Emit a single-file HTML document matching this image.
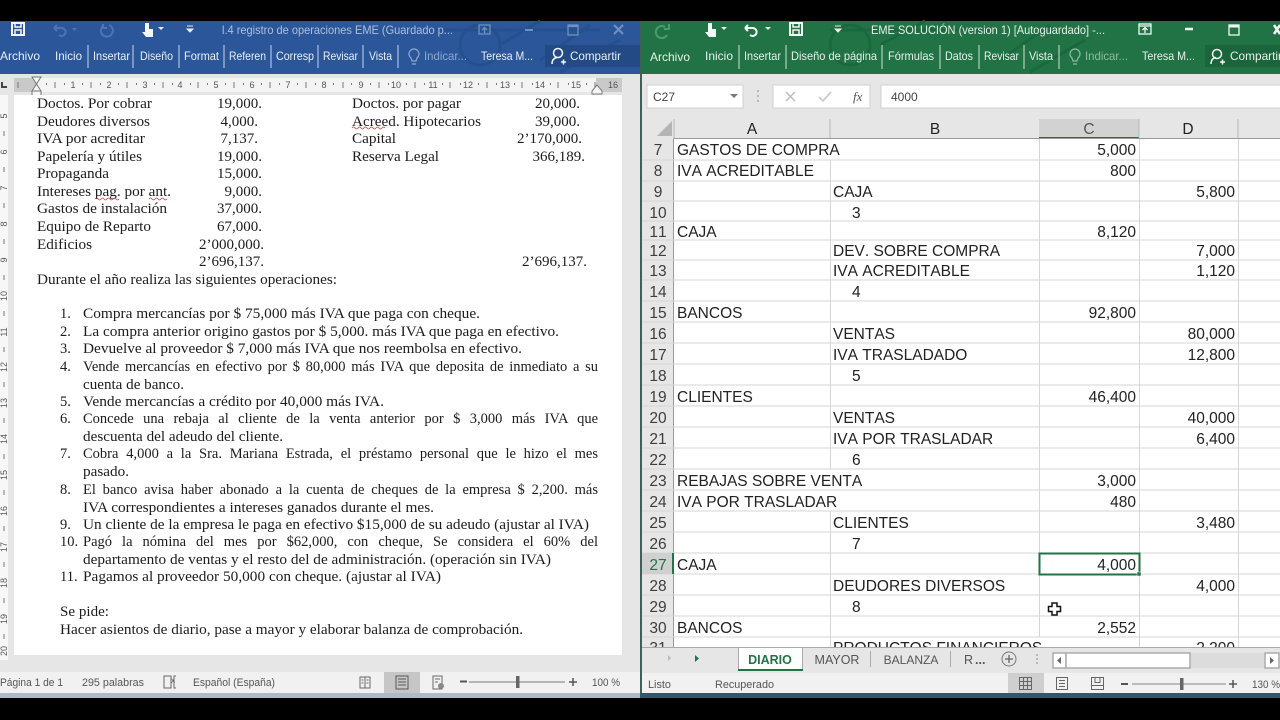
<!DOCTYPE html>
<html lang="es"><head><meta charset="utf-8"><title>Word y Excel</title>
<style>
html,body{margin:0;padding:0;background:#000;width:1280px;height:720px;overflow:hidden}
svg{position:absolute;left:0;top:0}
.u{font-family:"Liberation Sans",sans-serif}
.w{font-family:"Liberation Serif",serif;font-size:14.5px;fill:#1c1c1c}
.w .r{font-size:15px}
.x{font-family:"Liberation Sans",sans-serif;font-size:15.5px;fill:#222;font-kerning:none}
.r{text-anchor:end}
.c{text-anchor:middle}
.h{fill:#3d3d3d;text-anchor:middle}
.t{font-family:"Liberation Sans",sans-serif;font-size:12px;fill:#e8eef6}
.tg{font-family:"Liberation Sans",sans-serif;font-size:12px;fill:#e6f1ea}
.s{font-family:"Liberation Sans",sans-serif;font-size:11px;fill:#555}
.rl{font-family:"Liberation Sans",sans-serif;font-size:9px;fill:#555;text-anchor:middle}
.j{position:absolute;left:83px;width:515px;font:14.5px/18px "Liberation Serif",serif;color:#1c1c1c;text-align:justify;text-align-last:justify;white-space:nowrap}
.soft{position:absolute;left:0;top:0;width:1280px;height:720px;filter:blur(.3px)}
</style></head><body>
<div class="soft">
<svg width="1280" height="720" viewBox="0 0 1280 720">
<rect width="1280" height="720" fill="#000"/>

<!-- WORD window -->
<rect x="0" y="21" width="640" height="53" fill="#2b579a"/>
<g fill="none" stroke="#24508f" stroke-width="3">
<circle cx="480" cy="45" r="20"/><path d="M440 30H600M500 45L540 21M540 60L590 25M560 72L620 40"/>
</g>
<rect x="0" y="74" width="640" height="598" fill="#e6e6e6"/>
<rect x="14" y="78" width="608" height="14" fill="#f4f4f4"/>
<rect x="14" y="78" width="22" height="14" fill="#c9c9c9"/>
<rect x="596" y="78" width="26" height="14" fill="#c9c9c9"/>
<path d="M2 82v5h5" stroke="#444" stroke-width="2" fill="none"/>
<g>
<text class="rl" x="73" y="88">1</text><text class="rl" x="109" y="88">2</text><text class="rl" x="145" y="88">3</text><text class="rl" x="180" y="88">4</text><text class="rl" x="216" y="88">5</text><text class="rl" x="252" y="88">6</text><text class="rl" x="288" y="88">7</text><text class="rl" x="324" y="88">8</text><text class="rl" x="361" y="88">9</text><text class="rl" x="396" y="88">10</text><text class="rl" x="433" y="88">11</text><text class="rl" x="468" y="88">12</text><text class="rl" x="505" y="88">13</text><text class="rl" x="540" y="88">14</text><text class="rl" x="576" y="88">15</text><text class="rl" x="613" y="88">16</text>
</g>
<path d="M18 82v6M55 82v6M91 82v6M127 82v6M163 82v6M198 82v6M234 82v6M270 82v6M306 82v6M343 82v6M379 82v6M415 82v6M450 82v6M487 82v6M522 82v6M558 82v6M595 82v6" stroke="#777" stroke-width="1"/>
<path d="M46 84h1M64 84h1M82 84h1M100 84h1M118 84h1M136 84h1M154 84h1M172 84h1M190 84h1M207 84h1M225 84h1M243 84h1M261 84h1M279 84h1M297 84h1M315 84h1M333 84h1M351 84h1M370 84h1M388 84h1M406 84h1M424 84h1M442 84h1M460 84h1M478 84h1M496 84h1M514 84h1M532 84h1M550 84h1M568 84h1M586 84h1" stroke="#777" stroke-width="2"/>
<path d="M32 77h9l-4.500 7 4.500 7h-9l4.500-7z" fill="#f6f6f6" stroke="#777"/>
<rect x="32" y="91" width="9" height="6" fill="#f6f6f6" stroke="#777"/>
<path d="M592 91l5-6 5 6v3h-10z" fill="#f6f6f6" stroke="#777"/>
<!-- vertical ruler -->
<rect x="0" y="95" width="8" height="565" fill="#f7f7f7"/>
<g>
<text class="rl" transform="translate(7 116) rotate(-90)">5</text>
<text class="rl" transform="translate(7 152) rotate(-90)">6</text>
<text class="rl" transform="translate(7 188) rotate(-90)">7</text>
<text class="rl" transform="translate(7 224) rotate(-90)">8</text>
<text class="rl" transform="translate(7 260) rotate(-90)">9</text>
<text class="rl" transform="translate(7 296) rotate(-90)">10</text>
<text class="rl" transform="translate(7 332) rotate(-90)">11</text>
<text class="rl" transform="translate(7 367) rotate(-90)">12</text>
<text class="rl" transform="translate(7 403) rotate(-90)">13</text>
<text class="rl" transform="translate(7 439) rotate(-90)">14</text>
<text class="rl" transform="translate(7 475) rotate(-90)">15</text>
<text class="rl" transform="translate(7 511) rotate(-90)">16</text>
<text class="rl" transform="translate(7 547) rotate(-90)">17</text>
<text class="rl" transform="translate(7 583) rotate(-90)">18</text>
<text class="rl" transform="translate(7 619) rotate(-90)">19</text>
<text class="rl" transform="translate(7 651) rotate(-90)">20</text>
</g>
<path d="M4 131v5M4 167v5M4 203v5M4 239v5M4 275v5M4 311v5M4 347v5M4 382v5M4 418v5M4 454v5M4 490v5M4 526v5M4 562v5M4 598v5M4 634v5" stroke="#777"/>
<!-- page -->
<rect x="14" y="95" width="608" height="560" fill="#fff"/>

<!-- Word title bar icons -->
<g fill="none" stroke="#f2f5fa" stroke-width="2">
<rect x="12" y="23" width="12" height="12"/><path d="M15 23v4h6v-4M15 35v-5h6v5" stroke-width="1.500"/>
</g>
<path d="M54 28h7a4 4 0 1 1-2 7M54 28l3-3M54 28l3 3" fill="none" stroke="#4d75b0" stroke-width="2"/>
<path d="M72 28h5l-2.500 3z" fill="#4d75b0"/>
<path d="M109 25a6 6 0 1 1-6 1M103 24v4h4" fill="none" stroke="#4d75b0" stroke-width="2"/>
<path d="M145 23h4v6h4v8h-7l-4-5 3 0z" fill="#f2f5fa"/>
<path d="M158 27h6l-3 3z" fill="#e8eef6"/>
<path d="M187 26h6M187 29h6l-3 3z" stroke="#e8eef6" fill="#e8eef6"/>
<text class="t" x="222" y="34" textLength="231" lengthAdjust="spacingAndGlyphs" style="fill:#aebfd9">l.4 registro de operaciones EME (Guardado p...</text>
<g fill="none" stroke="#6f90c0" stroke-width="1.300">
<rect x="479" y="25" width="11" height="9"/><path d="M484.500 33v-5M482 30l2.500-2.500 2.500 2.500"/>
<path d="M525 30h8" stroke-width="2"/>
<rect x="568" y="25" width="10" height="10"/><path d="M568 26h10" stroke-width="2"/>
<path d="M614 25l9 9M623 25l-9 9" stroke-width="2"/>
</g>

<!-- Word ribbon tabs -->
<g>
<text class="t" x="0" y="60" textLength="40" lengthAdjust="spacingAndGlyphs">Archivo</text>
<text class="t" x="55" y="60" textLength="27" lengthAdjust="spacingAndGlyphs">Inicio</text>
<text class="t" x="93" y="60" textLength="37" lengthAdjust="spacingAndGlyphs">Insertar</text>
<text class="t" x="140" y="60" textLength="33" lengthAdjust="spacingAndGlyphs">Diseño</text>
<text class="t" x="184" y="60" textLength="35" lengthAdjust="spacingAndGlyphs">Format</text>
<text class="t" x="229" y="60" textLength="37" lengthAdjust="spacingAndGlyphs">Referen</text>
<text class="t" x="276" y="60" textLength="38" lengthAdjust="spacingAndGlyphs">Corresp</text>
<text class="t" x="323" y="60" textLength="35" lengthAdjust="spacingAndGlyphs">Revisar</text>
<text class="t" x="369" y="60" textLength="23" lengthAdjust="spacingAndGlyphs">Vista</text>
<text class="t" x="424" y="60" textLength="43" lengthAdjust="spacingAndGlyphs" style="fill:#8ea8cd">Indicar...</text>
<text class="t" x="481" y="60" textLength="52" lengthAdjust="spacingAndGlyphs">Teresa M...</text>
</g>
<path d="M88 45v23M133 45v23M179 45v23M224 45v23M271 45v23M318 45v23M363 45v23M398 45v23" stroke="#c7d5ea" stroke-width="1"/>
<path d="M411 58a5 5 0 1 1 6 0l-1 3h-4zM412 64h4" fill="none" stroke="#8ea8cd" stroke-width="1.200"/>
<rect x="545" y="45" width="95" height="22" fill="#234a85"/>
<circle cx="558" cy="53" r="4.500" fill="none" stroke="#f2f5fa" stroke-width="1.500"/>
<path d="M552 64c0-4 2-6 5-6.500M561 62h5M563.500 59.500v5" fill="none" stroke="#f2f5fa" stroke-width="1.500"/>
<text class="t" x="570" y="60" textLength="51" lengthAdjust="spacingAndGlyphs">Compartir</text>

<!-- Word document text -->
<g class="w">
<text x="37" y="108" textLength="115" lengthAdjust="spacingAndGlyphs">Doctos. Por cobrar</text><text class="r" x="262" y="108">19,000.</text>
<text x="37" y="126" textLength="113" lengthAdjust="spacingAndGlyphs">Deudores diversos</text><text class="r" x="258" y="126">4,000.</text>
<text x="37" y="143" textLength="108" lengthAdjust="spacingAndGlyphs">IVA por acreditar</text><text class="r" x="258" y="143">7,137.</text>
<text x="37" y="161" textLength="105" lengthAdjust="spacingAndGlyphs">Papelería y útiles</text><text class="r" x="262" y="161">19,000.</text>
<text x="37" y="178" textLength="72" lengthAdjust="spacingAndGlyphs">Propaganda</text><text class="r" x="262" y="178">15,000.</text>
<text x="37" y="196" textLength="134" lengthAdjust="spacingAndGlyphs">Intereses pag. por ant.</text><text class="r" x="262" y="196">9,000.</text>
<text x="37" y="213" textLength="130" lengthAdjust="spacingAndGlyphs">Gastos de instalación</text><text class="r" x="262" y="213">37,000.</text>
<text x="37" y="231" textLength="114" lengthAdjust="spacingAndGlyphs">Equipo de Reparto</text><text class="r" x="262" y="231">67,000.</text>
<text x="37" y="249" textLength="55" lengthAdjust="spacingAndGlyphs">Edificios</text><text class="r" x="264" y="249">2’000,000.</text>
<text class="r" x="264" y="266">2’696,137.</text>
<text x="37" y="284" textLength="300" lengthAdjust="spacingAndGlyphs">Durante el año realiza las siguientes operaciones:</text>

<text x="352" y="108" textLength="109" lengthAdjust="spacingAndGlyphs">Doctos. por pagar</text><text class="r" x="580" y="108">20,000.</text>
<text x="352" y="126" textLength="129" lengthAdjust="spacingAndGlyphs">Acreed. Hipotecarios</text><text class="r" x="580" y="126">39,000.</text>
<text x="352" y="143" textLength="44" lengthAdjust="spacingAndGlyphs">Capital</text><text class="r" x="582" y="143">2’170,000.</text>
<text x="352" y="161" textLength="87" lengthAdjust="spacingAndGlyphs">Reserva Legal</text><text class="r" x="585" y="161">366,189.</text>
<text class="r" x="587" y="266">2’696,137.</text>

<text x="60" y="318">1.</text><text x="83" y="318" textLength="397" lengthAdjust="spacingAndGlyphs">Compra mercancías por $ 75,000 más IVA que paga con cheque.</text>
<text x="60" y="336">2.</text><text x="83" y="336" textLength="476" lengthAdjust="spacingAndGlyphs">La compra anterior origino gastos por $ 5,000. más IVA que paga en efectivo.</text>
<text x="60" y="353">3.</text><text x="83" y="353" textLength="439" lengthAdjust="spacingAndGlyphs">Devuelve al proveedor $ 7,000 más IVA que nos reembolsa en efectivo.</text>
<text x="60" y="371">4.</text><text x="83" y="389" textLength="101" lengthAdjust="spacingAndGlyphs">cuenta de banco.</text>
<text x="60" y="406">5.</text><text x="83" y="406" textLength="301" lengthAdjust="spacingAndGlyphs">Vende mercancías a crédito por 40,000 más IVA.</text>
<text x="60" y="423">6.</text><text x="83" y="441" textLength="200" lengthAdjust="spacingAndGlyphs">descuenta del adeudo del cliente.</text>
<text x="60" y="458">7.</text><text x="83" y="476" textLength="46" lengthAdjust="spacingAndGlyphs">pasado.</text>
<text x="60" y="494">8.</text><text x="83" y="512" textLength="351" lengthAdjust="spacingAndGlyphs">IVA correspondientes a intereses ganados durante el mes.</text>
<text x="60" y="529">9.</text><text x="83" y="529" textLength="506" lengthAdjust="spacingAndGlyphs">Un cliente de la empresa le paga en efectivo $15,000 de su adeudo (ajustar al IVA)</text>
<text x="60" y="546">10.</text><text x="83" y="564" textLength="468" lengthAdjust="spacingAndGlyphs">departamento de ventas y el resto del de administración. (operación sin IVA)</text>
<text x="60" y="581">11.</text><text x="83" y="581" textLength="358" lengthAdjust="spacingAndGlyphs">Pagamos al proveedor 50,000 con cheque. (ajustar al IVA)</text>
<text x="60" y="616" textLength="49" lengthAdjust="spacingAndGlyphs">Se pide:</text>
<text x="60" y="634" textLength="463" lengthAdjust="spacingAndGlyphs">Hacer asientos de diario, pase a mayor y elaborar balanza de comprobación.</text>
</g>
<path d="M95 199q1.500-2 3 0t3 0 3 0 3 0 3 0 3 0 3 0 3 0M149 199q1.500-2 3 0t3 0 3 0 3 0 3 0 3 0M352 128q1.500-2 3 0t3 0 3 0 3 0 3 0 3 0 3 0 3 0 3 0 3 0 3 0" fill="none" stroke="#c44" stroke-width=".8"/>

<!-- Word status bar -->
<rect x="0" y="672" width="640" height="21" fill="#f1f1f1"/>
<rect x="0" y="693" width="640" height="5" fill="#aebbc6"/>
<rect x="384" y="672" width="36" height="21" fill="#c6c6c6"/>
<text class="s" x="0" y="686" textLength="63" lengthAdjust="spacingAndGlyphs">Página 1 de 1</text>
<text class="s" x="82" y="686" textLength="62" lengthAdjust="spacingAndGlyphs">295 palabras</text>
<path d="M164 676h7v12h-7zM176 676h-2v12h2" fill="none" stroke="#666"/>
<text class="s" x="171" y="683" style="font-size:8px">x</text>
<text class="s" x="193" y="686" textLength="82" lengthAdjust="spacingAndGlyphs">Español (España)</text>
<path d="M360 677h5v11h-5zM365 677h5v11h-5zM361.500 680h2M361.500 683h2M366.500 680h2M366.500 683h2" fill="none" stroke="#666"/>
<path d="M396 676h12v13h-12zM398 679h8M398 682h8M398 685h8" fill="none" stroke="#555"/>
<path d="M433 676h9v13h-9zM435 679h5M435 682h3" fill="none" stroke="#666"/><circle cx="441" cy="686" r="3" fill="#888"/>
<path d="M469 682h96" stroke="#777"/><path d="M460 681.500h7" stroke="#555" stroke-width="2"/>
<rect x="516" y="676" width="3.500" height="12" fill="#666"/>
<path d="M569 682h8M573 678v8" stroke="#555" stroke-width="1.500"/>
<text class="s" x="592" y="686" textLength="28" lengthAdjust="spacingAndGlyphs">100 %</text>

<!-- divider -->
<rect x="640" y="21" width="2" height="677" fill="#3f5f58"/>

<!-- EXCEL window -->
<rect x="642" y="21" width="638" height="53" fill="#217346"/>
<g fill="none" stroke="#1c683e" stroke-width="3">
<circle cx="850" cy="45" r="20"/><path d="M830 30H990M880 45L925 21M1000 60L1050 25M1030 72L1085 40"/>
</g>
<rect x="642" y="74" width="638" height="45" fill="#e6e6e6"/>
<rect x="647" y="85" width="96" height="23" fill="#fff" stroke="#d0d0d0"/>
<text class="u" x="653" y="101" font-size="12" fill="#444" textLength="22" lengthAdjust="spacingAndGlyphs">C27</text>
<path d="M730 94h8l-4 4z" fill="#777"/>
<path d="M758 90v2M758 95v2M758 100v2" stroke="#aaa" stroke-width="1.500"/>
<rect x="773" y="85" width="97" height="23" fill="#fff" stroke="#d0d0d0"/>
<path d="M786 92l9 9M795 92l-9 9" stroke="#bbb" stroke-width="1.500"/>
<path d="M819 97l4 4 8-9" stroke="#ccc" stroke-width="1.800" fill="none"/>
<text x="853" y="101" font-family="Liberation Serif,serif" font-style="italic" font-size="13" fill="#555">fx</text>
<rect x="881" y="85" width="400" height="23" fill="#fff" stroke="#d0d0d0"/>
<text class="u" x="891" y="101" font-size="12" fill="#444">4000</text>

<!-- Excel title bar -->
<path d="M665 27a6 6 0 1 0 2 8M669 24v5h-5" fill="none" stroke="#4c9a70" stroke-width="2"/>
<path d="M708 23h4v6h4v8h-7l-4-5 3 0z" fill="#f2f8f4"/>
<path d="M721 27h6l-3 3z" fill="#e6f1ea"/>
<path d="M745 28h7a4 4 0 1 1-2 7M745 28l3-3M745 28l3 3" fill="none" stroke="#f2f8f4" stroke-width="2"/>
<path d="M765 27h6l-3 3z" fill="#e6f1ea"/>
<g fill="none" stroke="#f2f8f4" stroke-width="2"><rect x="790" y="23" width="12" height="12"/><path d="M793 23v4h6v-4M793 35v-5h6v5" stroke-width="1.500"/></g>
<path d="M835 26h6M835 29h6l-3 3z" stroke="#e6f1ea" fill="#e6f1ea"/>
<text class="tg" x="871" y="34" textLength="234" lengthAdjust="spacingAndGlyphs">EME SOLUCIÓN (version 1) [Autoguardado] -...</text>
<g fill="none" stroke="#f2f8f4" stroke-width="1.300">
<rect x="1139" y="24" width="12" height="10"/><path d="M1145 33v-5M1142.500 30l2.500-2.500 2.500 2.500M1139 26h12"/>
<path d="M1185 29h8" stroke-width="2.500"/>
<rect x="1229" y="25" width="10" height="10"/><path d="M1229 26.500h10" stroke-width="2"/>
<path d="M1274 25l6 9M1280 25l-6 9" stroke-width="2.500"/>
</g>

<!-- Excel tabs -->
<text class="tg" x="650" y="61" textLength="40" lengthAdjust="spacingAndGlyphs">Archivo</text>
<text class="tg" x="705" y="60" textLength="28" lengthAdjust="spacingAndGlyphs">Inicio</text>
<text class="tg" x="744" y="60" textLength="37" lengthAdjust="spacingAndGlyphs">Insertar</text>
<text class="tg" x="791" y="60" textLength="86" lengthAdjust="spacingAndGlyphs">Diseño de página</text>
<text class="tg" x="888" y="60" textLength="46" lengthAdjust="spacingAndGlyphs">Fórmulas</text>
<text class="tg" x="945" y="60" textLength="28" lengthAdjust="spacingAndGlyphs">Datos</text>
<text class="tg" x="984" y="60" textLength="35" lengthAdjust="spacingAndGlyphs">Revisar</text>
<text class="tg" x="1029" y="60" textLength="24" lengthAdjust="spacingAndGlyphs">Vista</text>
<text class="tg" x="1085" y="60" textLength="43" lengthAdjust="spacingAndGlyphs" style="fill:#8dbba1">Indicar...</text>
<text class="tg" x="1142" y="60" textLength="53" lengthAdjust="spacingAndGlyphs">Teresa M...</text>
<path d="M739 45v24M786 45v24M882 45v24M940 45v24M979 45v24M1024 45v24M1059 45v24" stroke="#cfe3d7" stroke-width="1"/>
<path d="M1072 58a5 5 0 1 1 6 0l-1 3h-4zM1073 64h4" fill="none" stroke="#8dbba1" stroke-width="1.200"/>
<rect x="1205" y="45" width="75" height="22" fill="#1c643c"/>
<circle cx="1217" cy="54" r="4.500" fill="none" stroke="#f2f8f4" stroke-width="1.500"/>
<path d="M1211 64c0-4 2-6 5-6.500M1220 62h5M1222.500 59.500v5" fill="none" stroke="#f2f8f4" stroke-width="1.500"/>
<text class="tg" x="1230" y="60" textLength="52" lengthAdjust="spacingAndGlyphs">Compartir</text>

<!-- Excel grid -->
<rect x="642" y="119" width="638" height="20" fill="#e6e6e6"/>
<rect x="642" y="139" width="32" height="510" fill="#e6e6e6"/>
<rect x="674" y="139" width="606" height="510" fill="#fff"/>
<path d="M672 121v15h-15z" fill="#b5b5b5"/>
<rect x="1039" y="119" width="100" height="19" fill="#d2d2d2"/>
<rect x="1039" y="137" width="100" height="2" fill="#217346"/>
<path d="M674 119v20M830 119v20M1139 119v20M1238 119v20" stroke="#b5b5b5"/>
<path d="M673.500 138.500H1280" stroke="#9a9a9a"/>
<path d="M673.500 139V649" stroke="#9a9a9a"/>
<path d="M642 160h638M642 181h638M642 201h638M642 221h638M642 240h638M642 260h638M642 280h638M642 301h638M642 322h638M642 343h638M642 364h638M642 385h638M642 406h638M642 427h638M642 448h638M642 469h638M642 490h638M642 511h638M642 532h638M642 553h638M642 574h638M642 595h638M642 616h638M642 637h638" stroke="#d6d6d6"/>
<path d="M830.500 139V649M1039.500 139V649M1139.500 139V649M1238.500 139V649" stroke="#d6d6d6"/>
<!-- text overflow hides gridlines -->
<rect x="829" y="139.500" width="3" height="20" fill="#fff"/>
<rect x="829" y="469.500" width="3" height="20" fill="#fff"/>
<rect x="829" y="490.500" width="3" height="20" fill="#fff"/>
<rect x="1038" y="637.500" width="3" height="12" fill="#fff"/>
<rect x="642" y="553" width="32" height="21" fill="#d0d0d0"/>
<rect x="672" y="553" width="2" height="21" fill="#217346"/>
<g class="x">
<text class="c" x="752" y="134" style="fill:#222">A</text><text class="c" x="935" y="134" style="fill:#222">B</text><text class="c" x="1089" y="134" style="fill:#555">C</text><text class="c" x="1188" y="134" style="fill:#222">D</text>
<text class="h" x="658" y="155">7</text><text class="h" x="658" y="176">8</text><text class="h" x="658" y="197">9</text><text class="h" x="658" y="218">10</text><text class="h" x="658" y="237">11</text><text class="h" x="658" y="256">12</text><text class="h" x="658" y="276">13</text><text class="h" x="658" y="297">14</text><text class="h" x="658" y="318">15</text><text class="h" x="658" y="339">16</text><text class="h" x="658" y="360">17</text><text class="h" x="658" y="381">18</text><text class="h" x="658" y="402">19</text><text class="h" x="658" y="423">20</text><text class="h" x="658" y="444">21</text><text class="h" x="658" y="465">22</text><text class="h" x="658" y="486">23</text><text class="h" x="658" y="507">24</text><text class="h" x="658" y="528">25</text><text class="h" x="658" y="549">26</text><text class="h" x="658" y="570" style="fill:#217346">27</text><text class="h" x="658" y="591">28</text><text class="h" x="658" y="612">29</text><text class="h" x="658" y="633">30</text><text class="h" x="658" y="653">31</text>

<text x="677" y="155">GASTOS DE COMPRA</text><text class="r" x="1136" y="155">5,000</text>
<text x="677" y="176">IVA ACREDITABLE</text><text class="r" x="1136" y="176">800</text>
<text x="833" y="197">CAJA</text><text class="r" x="1235" y="197">5,800</text>
<text x="852" y="218">3</text>
<text x="677" y="237">CAJA</text><text class="r" x="1136" y="237">8,120</text>
<text x="833" y="256">DEV. SOBRE COMPRA</text><text class="r" x="1235" y="256">7,000</text>
<text x="833" y="276">IVA ACREDITABLE</text><text class="r" x="1235" y="276">1,120</text>
<text x="852" y="297">4</text>
<text x="677" y="318">BANCOS</text><text class="r" x="1136" y="318">92,800</text>
<text x="833" y="339">VENTAS</text><text class="r" x="1235" y="339">80,000</text>
<text x="833" y="360">IVA TRASLADADO</text><text class="r" x="1235" y="360">12,800</text>
<text x="852" y="381">5</text>
<text x="677" y="402">CLIENTES</text><text class="r" x="1136" y="402">46,400</text>
<text x="833" y="423">VENTAS</text><text class="r" x="1235" y="423">40,000</text>
<text x="833" y="444">IVA POR TRASLADAR</text><text class="r" x="1235" y="444">6,400</text>
<text x="852" y="465">6</text>
<text x="677" y="486">REBAJAS SOBRE VENTA</text><text class="r" x="1136" y="486">3,000</text>
<text x="677" y="507">IVA POR TRASLADAR</text><text class="r" x="1136" y="507">480</text>
<text x="833" y="528">CLIENTES</text><text class="r" x="1235" y="528">3,480</text>
<text x="852" y="549">7</text>
<text x="677" y="570">CAJA</text><text class="r" x="1136" y="570">4,000</text>
<text x="833" y="591">DEUDORES DIVERSOS</text><text class="r" x="1235" y="591">4,000</text>
<text x="852" y="612">8</text>
<text x="677" y="633">BANCOS</text><text class="r" x="1136" y="633">2,552</text>
<text x="833" y="653">PRODUCTOS FINANCIEROS</text><text class="r" x="1235" y="653">2,200</text>
</g>
<rect x="1039.500" y="553.500" width="100" height="21" fill="none" stroke="#217346" stroke-width="2"/>
<rect x="1137" y="572" width="4" height="4" fill="#217346" stroke="#fff" stroke-width=".5"/>
<path d="M1052 603h5v3.500h3.500v5H1057v3.500h-5v-3.500h-3.500v-5h3.500z" fill="#fff" stroke="#111" stroke-width="1.500"/>

<!-- Excel sheet tabs -->
<rect x="642" y="647" width="638" height="26" fill="#e6e6e6"/>
<path d="M642 647.500h96M803 647.500h477" stroke="#aaa"/>
<path d="M668 655l3 3-3 3z" fill="#bbb"/><path d="M695 655l4 3.500-4 3.500z" fill="#217346"/>
<path d="M738 647h65v23h-65z" fill="#fff"/>
<path d="M738 647.500h65M738.500 647v22M802.500 647v22" stroke="#aaa" fill="none"/>
<rect x="738" y="669" width="65" height="2" fill="#217346"/>
<text class="u c" x="770" y="664" font-size="12.500" font-weight="bold" fill="#217346">DIARIO</text>
<text class="u c" x="837" y="664" font-size="12.500" fill="#555">MAYOR</text>
<text class="u c" x="911" y="664" font-size="12" fill="#555">BALANZA</text>
<text class="u" x="964" y="664" font-size="12.500" fill="#555">R</text>
<text class="u" x="975" y="664" font-size="12.500" font-weight="bold" fill="#555">...</text>
<path d="M870.500 651v16M950.500 651v16" stroke="#aaa"/>
<circle cx="1009" cy="659" r="7" fill="none" stroke="#777"/><path d="M1005 659h8M1009 655v8" stroke="#666" stroke-width="1.300"/>
<path d="M1037 654v2M1037 658v2M1037 662v2" stroke="#aaa" stroke-width="1.500"/>
<rect x="1053" y="653" width="212" height="15" fill="#dcdcdc"/>
<rect x="1053" y="653" width="13" height="15" fill="#fff" stroke="#ababab" stroke-width="1.500"/>
<path d="M1061 657l-4 3.500 4 3.500z" fill="#666"/>
<rect x="1066" y="653" width="124" height="15" fill="#fff" stroke="#ababab" stroke-width="1.500"/>
<rect x="1265" y="653" width="14" height="15" fill="#fff" stroke="#ababab" stroke-width="1.500"/>
<path d="M1270 657l4 3.500-4 3.500z" fill="#666"/>

<!-- Excel status -->
<rect x="642" y="673" width="638" height="20" fill="#f1f1f1"/>
<rect x="640" y="693" width="640" height="5" fill="#35566a"/>
<rect x="1008" y="673" width="36" height="20" fill="#cfcfcf"/>
<text class="s" x="648" y="688" textLength="23" lengthAdjust="spacingAndGlyphs">Listo</text>
<text class="s" x="715" y="688" textLength="59" lengthAdjust="spacingAndGlyphs">Recuperado</text>
<path d="M1019.500 677.500h12v12h-12zM1023.500 677.500v12M1027.500 677.500v12M1019.500 681.500h12M1019.500 685.500h12" fill="none" stroke="#666"/>
<path d="M1056.500 677.500h11v12h-11zM1059 680.500h6M1059 683.500h6M1059 686.500h6" fill="none" stroke="#666"/>
<path d="M1091.500 677.500h12v12h-12zM1091.500 685.500h12M1095 677.500v5h5v-5" fill="none" stroke="#666"/>
<path d="M1121 684h7" stroke="#555" stroke-width="2"/>
<path d="M1132 684h94" stroke="#888"/>
<rect x="1180" y="678" width="3.500" height="12" fill="#666"/>
<path d="M1229 684h8M1233 680v8" stroke="#555" stroke-width="1.500"/>
<text class="s" x="1252" y="688" textLength="28" lengthAdjust="spacingAndGlyphs">130 %</text>
</svg>

<!-- justified lines -->
<div class="j" style="top:358px">Vende mercancías en efectivo por $ 80,000 más IVA que deposita de inmediato a su</div>
<div class="j" style="top:410px">Concede una rebaja al cliente de la venta anterior por $ 3,000 más IVA que</div>
<div class="j" style="top:445px">Cobra 4,000 a la Sra. Mariana Estrada, el préstamo personal que le hizo el mes</div>
<div class="j" style="top:481px">El banco avisa haber abonado a la cuenta de cheques de la empresa $ 2,200. más</div>
<div class="j" style="top:533px">Pagó la nómina del mes por $62,000, con cheque, Se considera el 60% del</div>
</div>
</body></html>
